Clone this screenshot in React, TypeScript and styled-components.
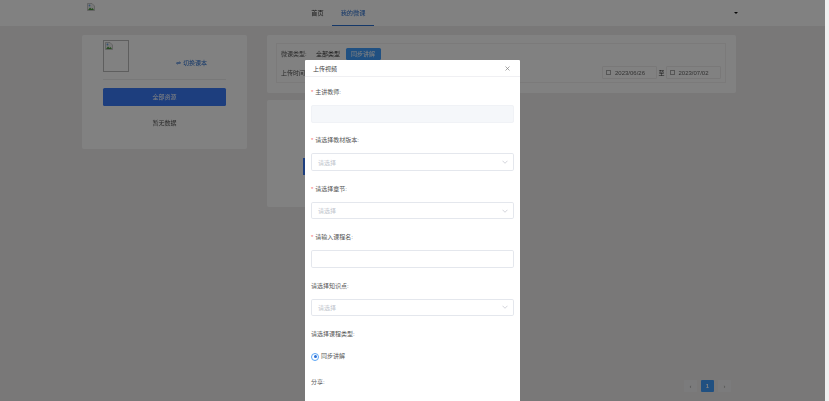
import React from "react";
import styled, { createGlobalStyle } from "styled-components";

const Global = createGlobalStyle`
  html, body { margin: 0; padding: 0; height: 401px; overflow: hidden; background: #f0eeee; }
  body { font-family: "Liberation Sans", "Noto Sans CJK SC", sans-serif; font-size: 6px; color: #333; }
  * { box-sizing: border-box; }
`;

const Shell = styled.div`display: flex; width: 829px; height: 401px; filter: blur(0.3px);`;
const Page = styled.div`width: 825px; height: 401px; display: flex; flex-direction: column;`;
const ScrollTrack = styled.div`width: 4px; height: 401px; background: #f1f1f1; position: relative; z-index: 20;`;

const Header = styled.header`
  height: 26px; background: #fff; display: flex; align-items: stretch; padding: 0 88px 0 87px; position: relative;
`;
const Logo = styled.div`width: 8px; height: 8px; margin-top: 3px;`;
const Nav = styled.nav`display: flex; margin-left: 208px;`;
const NavItem = styled.div<{ $active?: boolean }>`
  width: ${(p) => (p.$active ? 42 : 29)}px;
  display: flex; align-items: center; justify-content: center;
  font-size: 6.2px;
  color: ${(p) => (p.$active ? "#2a6fd0" : "#333")};
  border-bottom: 1px solid ${(p) => (p.$active ? "#2a6fd0" : "transparent")};
`;
const Caret = styled.div`
  margin-left: auto; align-self: center; width: 0; height: 0;
  border-left: 2px solid transparent; border-right: 2px solid transparent; border-top: 2.5px solid #111; margin-right: -1px;
`;

const Main = styled.main`display: flex; align-items: flex-start; gap: 20px; padding: 9px 0 0 82px;`;
const SideCard = styled.aside`
  width: 165px; height: 114px; background: #fff; border-radius: 2px; padding: 6px 21px 0; display: flex; flex-direction: column; flex-shrink: 0;
`;
const BookRow = styled.div`display: flex; align-items: flex-end; height: 39px; padding-bottom: 7px; border-bottom: 1px solid #eee;`;
const Cover = styled.div`width: 26px; height: 32px; border: 1px solid #bbb; padding: 1px;`;
const Swap = styled.div`margin-left: auto; margin-right: 19px; margin-bottom: 5px; color: #2a6fd0; display: flex; align-items: center; gap: 2px;`;
const AllButton = styled.div`
  height: 17.5px; margin-top: 8px; background: #3a7bfa; border-radius: 1.5px; color: #fff;
  display: flex; align-items: center; justify-content: center;
`;
const Empty = styled.div`margin-top: 12px; text-align: center; color: #555;`;

const Content = styled.div`width: 469px; display: flex; flex-direction: column; gap: 7px;`;
const FilterCard = styled.section`background: #fff; border-radius: 2px; padding: 8px 10px 10px 9px; height: 58px;`;
const FilterInner = styled.div`border: 1px solid #f4f2f2; height: 40px; padding: 0 4px; display: flex; flex-direction: column; justify-content: center; gap: 5px;`;
const FilterRow = styled.div`display: flex; align-items: center; height: 14px;`;
const FilterLabel = styled.span`color: #555; width: 29.5px; flex-shrink: 0; white-space: nowrap;`;
const FilterChip = styled.span<{ $on?: boolean }>`
  padding: 0 5.5px; height: 12px; display: inline-flex; align-items: center; border-radius: 1.5px;
  color: ${(p) => (p.$on ? "#fff" : "#333")}; background: ${(p) => (p.$on ? "#409eff" : "transparent")};
`;
const DateBox = styled.div`
  width: 55.5px; height: 13px; border: 1px solid #f0eeee; border-radius: 1px; display: flex; align-items: center; padding-left: 3px; gap: 4px; color: #666;
`;
const DateBoxes = styled.div`margin-left: auto; display: flex; align-items: center; gap: 1px; color: #333;`;
const DateIcon = styled.span`width: 5px; height: 5px; border: 0.6px solid #aaa; display: block;`;
const ListCard = styled.section`width: 253px; height: 107px; background: #fff; border-radius: 2px; padding: 58px 0 0 35.5px;`;
const HiddenBlue = styled.div`width: 4px; height: 17px; background: #3a7bfa;`;
const Pager = styled.div`position: absolute; left: 684px; top: 380px; display: flex; gap: 4px;`;
const PageBtn = styled.div<{ $on?: boolean }>`
  width: 13px; height: 12px; border-radius: 1px;
  display: flex; align-items: center; justify-content: center; font-size: 6px; font-weight: bold;
  background: ${(p) => (p.$on ? "#409eff" : "#f4f4f5")}; color: ${(p) => (p.$on ? "#fff" : "#aaa")};
`;

const Overlay = styled.div`position: fixed; inset: 0; background: rgba(0, 0, 0, 0.495); z-index: 10; overflow: hidden;`;
const Modal = styled.div`
  position: absolute; left: 304.5px; top: 60px; width: 215.5px; min-height: 400px; background: #fff; border-radius: 1px;
`;
const ModalHead = styled.div`
  height: 16.5px; border-bottom: 1px solid #f0f0f3; display: flex; align-items: center; justify-content: space-between; padding: 1px 10px 0 8.5px;
  color: #444;
`;
const Form = styled.form`padding: 11.5px 6.5px 0; display: flex; flex-direction: column;`;
const Field = styled.div`height: 48.4px; display: flex; flex-direction: column;`;
const Label = styled.label`height: 17px; flex-shrink: 0; line-height: 8px; color: #555; white-space: nowrap;`;
const Star = styled.span`color: #f56c6c; margin-right: 2px;`;
const Control = styled.div<{ $disabled?: boolean }>`
  height: 17.5px; width: 202.5px; border: 1px solid ${(p) => (p.$disabled ? "#f0f2f6" : "#e4e7ed")}; border-radius: 1.8px;
  background: ${(p) => (p.$disabled ? "#f5f7fa" : "#fff")};
  display: flex; align-items: center; justify-content: space-between; padding: 0 5px 0 6px; color: #c0c4cc;
`;
const RadioRow = styled.div`display: flex; align-items: center; gap: 2px; color: #555; height: 12px; margin-top: 3px;`;
const RadioDot = styled.span`
  width: 8px; height: 8px; border-radius: 50%; background: #fff; border: 1.2px solid #5aa5f5; display: flex; align-items: center; justify-content: center; margin-top: 2px;
  &::after { content: ""; width: 3px; height: 3px; border-radius: 50%; background: #2a70d8; }
`;
const ShareLabel = styled(Label)`margin-top: 16px;`;

const BrokenImage = () => (
  <svg width="8" height="8" viewBox="0 0 16 16" aria-hidden="true">
    <path d="M1 1h9l5 5v9H1z" fill="#eee" stroke="#aaa" strokeWidth="1.2" />
    <path d="M2 14l4-5 3 3 2-2 3 4z" fill="#4f9a45" />
    <circle cx="5" cy="5" r="1.8" fill="#6b9fe0" />
  </svg>
);
const Chevron = () => (
  <svg width="6" height="4" viewBox="0 0 12 8" aria-hidden="true">
    <path d="M1 1.5l5 5 5-5" fill="none" stroke="#b5b9c2" strokeWidth="1.2" />
  </svg>
);
const Close = () => (
  <svg width="5" height="5" viewBox="0 0 10 10" aria-hidden="true">
    <path d="M1 1l8 8M9 1l-8 8" stroke="#777" strokeWidth="1.3" />
  </svg>
);
const SwapIcon = () => (
  <svg width="5" height="4" viewBox="0 0 10 8" aria-hidden="true">
    <path d="M1 3h8L7 1M9 5H1l2 2" fill="none" stroke="#2a6fd0" strokeWidth="1.2" />
  </svg>
);

const fields = [
  { label: "主讲教师:", req: true, disabled: true },
  { label: "请选择教材版本:", req: true, text: "请选择", arrow: true },
  { label: "请选择章节:", req: true, text: "请选择", arrow: true },
  { label: "请输入课程名:", req: true },
  { label: "请选择知识点:", text: "请选择", arrow: true },
];

export default function App() {
  return (
    <Shell>
      <Global />
      <Page>
        <Header>
          <Logo><BrokenImage /></Logo>
          <Nav>
            <NavItem>首页</NavItem>
            <NavItem $active>我的微课</NavItem>
          </Nav>
          <Caret />
        </Header>
        <Main>
          <SideCard>
            <BookRow>
              <Cover><BrokenImage /></Cover>
              <Swap><SwapIcon />切换课本</Swap>
            </BookRow>
            <AllButton>全部资源</AllButton>
            <Empty>暂无数据</Empty>
          </SideCard>
          <Content>
            <FilterCard>
              <FilterInner>
                <FilterRow>
                  <FilterLabel>微课类型:</FilterLabel>
                  <FilterChip>全部类型</FilterChip>
                  <FilterChip $on>同步讲解</FilterChip>
                </FilterRow>
                <FilterRow>
                  <FilterLabel>上传时间:</FilterLabel>
                  <DateBoxes>
                    <DateBox><DateIcon />2023/06/26</DateBox>
                    至
                    <DateBox><DateIcon />2023/07/02</DateBox>
                  </DateBoxes>
                </FilterRow>
              </FilterInner>
            </FilterCard>
            <ListCard><HiddenBlue /></ListCard>
          </Content>
        </Main>
        <Pager>
          <PageBtn>‹</PageBtn>
          <PageBtn $on>1</PageBtn>
          <PageBtn>›</PageBtn>
        </Pager>
        <Overlay>
          <Modal>
            <ModalHead>上传视频<Close /></ModalHead>
            <Form>
              {fields.map((f) => (
                <Field key={f.label}>
                  <Label>{f.req && <Star>*</Star>}{f.label}</Label>
                  <Control $disabled={f.disabled}>
                    <span>{f.text}</span>
                    {f.arrow && <Chevron />}
                  </Control>
                </Field>
              ))}
              <Label>请选择课程类型:</Label>
              <RadioRow><RadioDot />同步讲解</RadioRow>
              <ShareLabel>分享:</ShareLabel>
            </Form>
          </Modal>
        </Overlay>
      </Page>
      <ScrollTrack />
    </Shell>
  );
}
